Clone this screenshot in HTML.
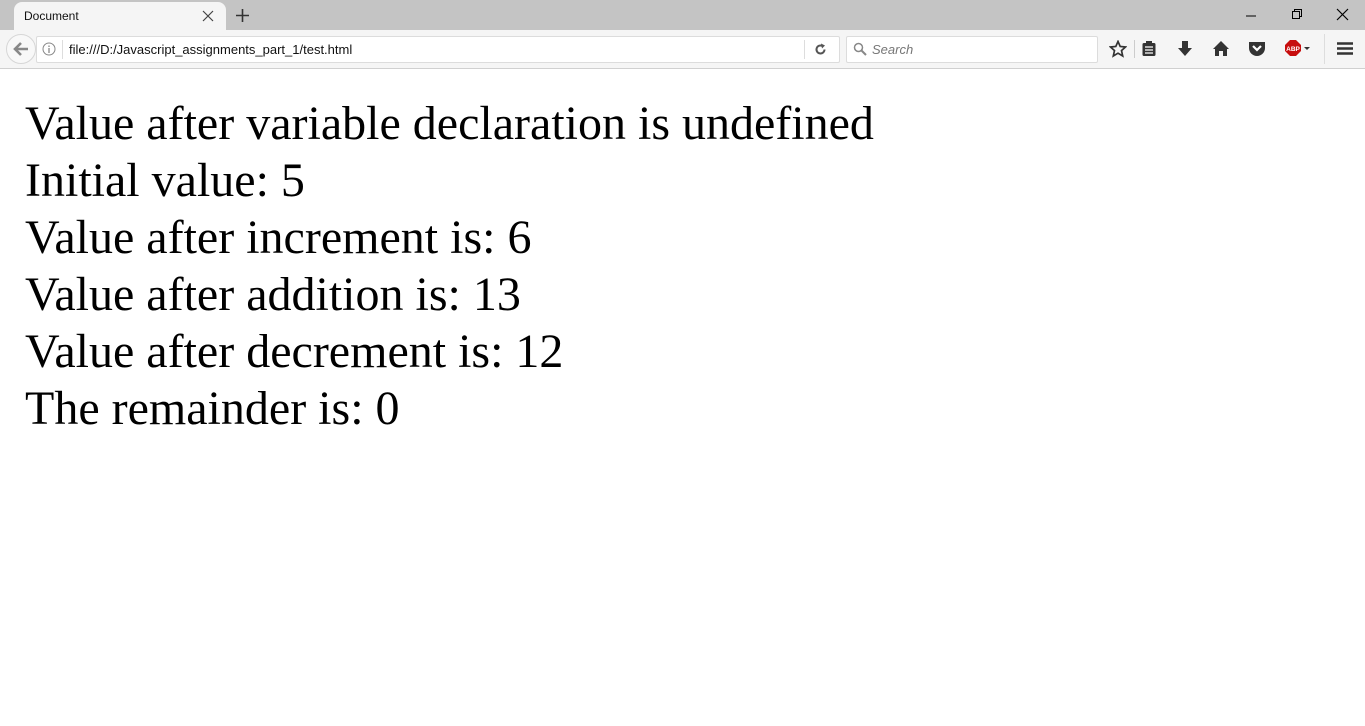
<!DOCTYPE html>
<html><head><meta charset="utf-8"><style>
body{margin:0;width:1365px;height:726px;background:#fff;position:relative;overflow:hidden;font-family:"Liberation Sans",sans-serif}
.tabbar{position:absolute;left:0;top:0;width:1365px;height:30px;background:#c4c4c4}
.tab{position:absolute;left:14px;top:2px;width:212px;height:28px;background:#f5f5f5;border-radius:8px 8px 0 0}
.tab span{position:absolute;left:10px;top:7px;font-size:12px;color:#111}
.toolbar{position:absolute;left:0;top:30px;width:1365px;height:38px;background:#f5f5f5;border-bottom:1px solid #d0d0d0}
.url{position:absolute;left:36px;top:6px;width:802px;height:25px;background:#fff;border:1px solid #dcdcdc;border-radius:2px}
.search{position:absolute;left:846px;top:6px;width:250px;height:25px;background:#fff;border:1px solid #dcdcdc;border-radius:2px}
.back{position:absolute;left:6px;top:4px;width:28px;height:28px;border-radius:50%;border:1px solid #d6d6d6;background:#f8f8f8}
.t{position:absolute;left:25px;font-family:"Liberation Serif",serif;font-size:48px;line-height:57px;color:#000;white-space:nowrap}
svg{position:absolute}
</style></head><body>
<div class="tabbar">
<div class="tab"><span>Document</span>
<svg style="left:188px;top:8px" width="12" height="12"><path d="M1 1L11 11M11 1L1 11" stroke="#444" stroke-width="1.2"/></svg></div>
<svg style="left:236px;top:9px" width="13" height="13"><path d="M6.5 0V13M0 6.5H13" stroke="#333" stroke-width="1.6"/></svg>
<svg style="left:1245px;top:10px" width="12" height="12"><path d="M1 6H11" stroke="#000"/></svg>
<svg style="left:1291px;top:8px" width="12" height="12"><path d="M1.5 3.5H8.5V10.5H1.5Z M3.5 3.5V1.5H10.5V8.5H8.5" stroke="#000" fill="none"/></svg>
<svg style="left:1336px;top:8px" width="13" height="13"><path d="M1 1L12 12M12 1L1 12" stroke="#000" stroke-width="1.2"/></svg>
</div>
<div class="toolbar">
<div class="back"><svg style="left:6px;top:7px" width="16" height="14"><path d="M8 1L2 7L8 13M2 7H15" stroke="#888" stroke-width="2.6" fill="none"/></svg></div>
<div class="url">
<svg style="left:5px;top:5px" width="14" height="14"><circle cx="7" cy="7" r="6" stroke="#888" fill="none"/><path d="M7 6V11M7 3.5V5" stroke="#888" stroke-width="1.3"/></svg>
<div style="position:absolute;left:25px;top:3px;width:1px;height:19px;background:#ddd"></div>
<span style="position:absolute;left:32px;top:5px;font-size:13px;color:#111">file:///D:/Javascript_assignments_part_1/test.html</span>
<div style="position:absolute;left:767px;top:3px;width:1px;height:19px;background:#ddd"></div>
<svg style="left:777px;top:6px" width="13" height="13"><path d="M10.5 6.5A4 4 0 1 1 8.5 3" stroke="#555" stroke-width="2" fill="none"/><path d="M7 0.5L11 2.5L8 5.5Z" fill="#555"/></svg>
</div>
<div class="search">
<svg style="left:6px;top:5px" width="14" height="14"><circle cx="5.5" cy="5.5" r="4" stroke="#888" stroke-width="1.5" fill="none"/><path d="M8.5 8.5L13 13" stroke="#888" stroke-width="2"/></svg>
<span style="position:absolute;left:25px;top:5px;font-size:13px;color:#777;font-style:italic">Search</span>
</div>
<svg style="left:1109px;top:10px" width="18" height="18"><path d="M9 1.5L11.2 6.5L16.5 7L12.5 10.6L13.7 16L9 13.2L4.3 16L5.5 10.6L1.5 7L6.8 6.5Z" stroke="#333" stroke-width="1.7" fill="none"/></svg>
<div style="position:absolute;left:1134px;top:10px;width:1px;height:18px;background:#ccc"></div>
<svg style="left:1141px;top:10px" width="16" height="17"><rect x="1.5" y="3" width="13" height="13" rx="1.5" fill="#333"/><rect x="5" y="1" width="6" height="3" fill="#333"/><path d="M4 7H12M4 10H12M4 13H12" stroke="#fff" stroke-width="1.2"/></svg>
<svg style="left:1177px;top:10px" width="16" height="18"><path d="M5 1H11V8H15L8 16L1 8H5Z" fill="#333"/></svg>
<svg style="left:1212px;top:10px" width="18" height="17"><path d="M9 1L17 9H15V16H11V11H7V16H3V9H1Z" fill="#333"/></svg>
<svg style="left:1248px;top:10px" width="18" height="17"><path d="M1 2H17V8A8 8 0 0 1 1 8Z" fill="#333"/><path d="M5 6L9 10L13 6" stroke="#fff" stroke-width="2.2" fill="none"/></svg>
<svg style="left:1284px;top:9px" width="30" height="19"><polygon points="6,1 12,1 17,6 17,12 12,17 6,17 1,12 1,6" fill="#c70d0d"/><text x="9" y="12" font-size="6.5" font-weight="bold" fill="#fff" text-anchor="middle" font-family="Liberation Sans">ABP</text><path d="M20 8H26L23 11Z" fill="#333"/></svg>
<div style="position:absolute;left:1324px;top:4px;width:1px;height:30px;background:#ddd"></div>
<svg style="left:1336px;top:11px" width="18" height="15"><path d="M1 2.5H17M1 7.5H17M1 12.5H17" stroke="#333" stroke-width="2.6"/></svg>
</div>
<div class="t" style="top:95px">Value after variable declaration is undefined</div>
<div class="t" style="top:152px">Initial value: 5</div>
<div class="t" style="top:209px">Value after increment is: 6</div>
<div class="t" style="top:266px">Value after addition is: 13</div>
<div class="t" style="top:323px">Value after decrement is: 12</div>
<div class="t" style="top:380px">The remainder is: 0</div>
</body></html>
